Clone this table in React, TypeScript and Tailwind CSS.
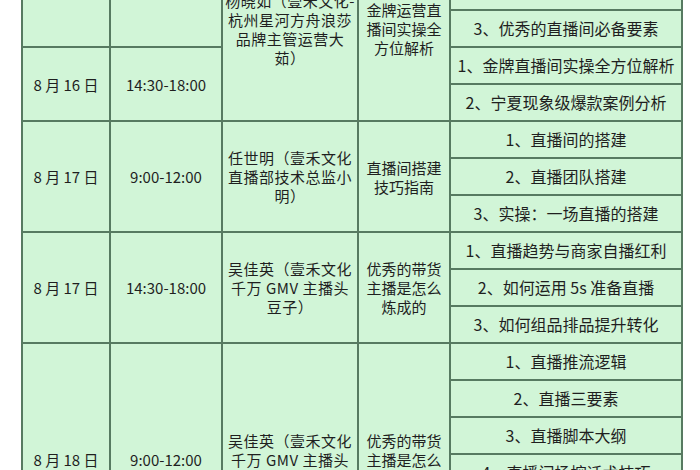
import React from 'react';

interface Session {
  date: string;
  time: string;
  rows: string;
}

interface Lecture {
  speaker: string[];
  topic: string[];
  rows: string;
}

// rows in the grid are 35px tall with a 2px rule between them
const sessions: Session[] = [
  { date: '8 月 16 日', time: '9:00-12:00', rows: 'row-start-1 row-span-3' },
  { date: '8 月 16 日', time: '14:30-18:00', rows: 'row-start-4 row-span-2' },
  { date: '8 月 17 日', time: '9:00-12:00', rows: 'row-start-6 row-span-3' },
  { date: '8 月 17 日', time: '14:30-18:00', rows: 'row-start-9 row-span-3' },
  { date: '8 月 18 日', time: '9:00-12:00', rows: 'row-start-12 row-span-6' },
];

const lectures: Lecture[] = [
  {
    speaker: ['杨晓如（壹禾文化-', '杭州星河方舟浪莎', '品牌主管运营大', '茹）'],
    topic: ['金牌运营直', '播间实操全', '方位解析'],
    rows: 'row-start-1 row-span-5',
  },
  {
    speaker: ['任世明（壹禾文化', '直播部技术总监小', '明）'],
    topic: ['直播间搭建', '技巧指南'],
    rows: 'row-start-6 row-span-3',
  },
  {
    speaker: ['吴佳英（壹禾文化', '千万 GMV 主播头', '豆子）'],
    topic: ['优秀的带货', '主播是怎么', '炼成的'],
    rows: 'row-start-9 row-span-3',
  },
  {
    speaker: ['吴佳英（壹禾文化', '千万 GMV 主播头', '豆子）'],
    topic: ['优秀的带货', '主播是怎么', '炼成的'],
    rows: 'row-start-12 row-span-6',
  },
];

const items = [
  '1、金牌运营的底层逻辑',
  '2、直播间数据复盘',
  '3、优秀的直播间必备要素',
  '1、金牌直播间实操全方位解析',
  '2、宁夏现象级爆款案例分析',
  '1、直播间的搭建',
  '2、直播团队搭建',
  '3、实操：一场直播的搭建',
  '1、直播趋势与商家自播红利',
  '2、如何运用 5s 准备直播',
  '3、如何组品排品提升转化',
  '1、直播推流逻辑',
  '2、直播三要素',
  '3、直播脚本大纲',
  '4、直播间场控话术技巧',
  '5、直播间数据复盘',
  '6、答疑与总结',
];

const cell = 'bg-[#d1f5d7] flex items-center justify-center text-center';

export default function App() {
  return (
    <div className="h-[470px] w-[700px] overflow-hidden bg-white font-['Noto_Sans_CJK_SC','Noto_Sans',sans-serif] text-[15px] leading-[19px] text-[#1f1f1f] [text-spacing-trim:space-all]">
      <div className="-mt-[65px] ml-[21px] grid w-fit grid-cols-[86px_110px_134px_90px_230px] grid-rows-[repeat(16,35px)_45px] gap-[2px] bg-[#577a61] p-[2px]">
        {sessions.map((s, i) => (
          <React.Fragment key={`s${i}`}>
            <div className={`${cell} col-start-1 ${s.rows}`}>{s.date}</div>
            <div className={`${cell} col-start-2 ${s.rows}`}>{s.time}</div>
          </React.Fragment>
        ))}
        {lectures.map((l, i) => (
          <React.Fragment key={`l${i}`}>
            <div className={`${cell} col-start-3 flex-col overflow-hidden whitespace-nowrap tracking-[0.5px] ${l.rows}`}>
              {l.speaker.map(line => (
                <span key={line}>{line}</span>
              ))}
            </div>
            <div className={`${cell} col-start-4 flex-col whitespace-nowrap ${l.rows}`}>
              {l.topic.map(line => (
                <span key={line}>{line}</span>
              ))}
            </div>
          </React.Fragment>
        ))}
        {items.map((t, i) => (
          <div key={`i${i}`} className={`${cell} col-start-5 text-[16px]`}>
            {t}
          </div>
        ))}
      </div>
    </div>
  );
}
